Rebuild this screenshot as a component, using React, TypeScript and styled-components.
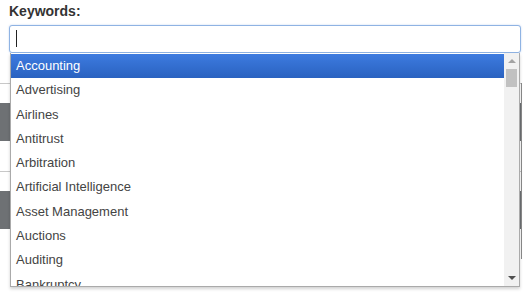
import React, { useState } from "react";
import styled, { createGlobalStyle } from "styled-components";

const GlobalStyle = createGlobalStyle`
  html, body {
    margin: 0;
    padding: 0;
    background: #fff;
    font-family: "Liberation Sans", Arial, sans-serif;
  }
`;

const keywords = [
  "Accounting",
  "Advertising",
  "Airlines",
  "Antitrust",
  "Arbitration",
  "Artificial Intelligence",
  "Asset Management",
  "Auctions",
  "Auditing",
  "Bankruptcy",
  "Banking",
];

const Page = styled.div`
  position: relative;
  width: 530px;
  height: 298px;
  overflow: hidden;
`;

const Field = styled.div`
  padding: 3px 9px 0 9px;
  position: relative;
`;

const Label = styled.label`
  display: block;
  font-size: 14px;
  font-weight: bold;
  color: #333;
  line-height: 17px;
  margin-bottom: 5px;
`;

const Input = styled.input`
  box-sizing: border-box;
  width: 512px;
  height: 28px;
  border: 1px solid #8fb3e3;
  border-radius: 3px;
  padding: 0 6px;
  font-size: 13px;
  font-family: inherit;
  outline: none;
  box-shadow: 0 0 2px rgba(102, 150, 220, 0.4);
`;

const Caret = styled.span`
  position: absolute;
  left: 16px;
  top: 30px;
  width: 1px;
  height: 17px;
  background: #222;
`;

const Behind = styled.div`
  margin-top: 30px;
  width: 522px;
  margin-left: -1px;
  border-right: 1px solid #8a8a8a;
`;

const Section = styled.div`
  border-top: 1px solid #c8c8c8;
  padding: 19px 0 30px 0;
`;

const GrayBar = styled.div`
  height: 38px;
  background: #6e7174;
`;

const Dropdown = styled.div`
  position: absolute;
  left: 10px;
  top: 53px;
  width: 510px;
  height: 234px;
  box-sizing: border-box;
  background: #fff;
  border: 1px solid #aaa;
  border-top: none;
  box-shadow: 0 2px 3px rgba(0, 0, 0, 0.18);
  display: flex;
  overflow: hidden;
`;

const List = styled.ul`
  list-style: none;
  margin: 0;
  padding: 1px 0 0 0;
  flex: 1;
  overflow: hidden;
`;

const Item = styled.li<{ $active: boolean }>`
  height: 24.3px;
  line-height: 24.3px;
  padding: 0 5px;
  font-size: 13px;
  color: ${(p) => (p.$active ? "#fff" : "#444")};
  background: ${(p) =>
    p.$active ? "linear-gradient(#3d7be0, #2a62c0)" : "transparent"};
  white-space: nowrap;
`;

const Scrollbar = styled.div`
  width: 15px;
  background: #f1f1f1;
  display: flex;
  flex-direction: column;
  align-items: center;
`;

const Arrow = styled.div<{ $down?: boolean; $color: string }>`
  width: 0;
  height: 0;
  border-left: 4px solid transparent;
  border-right: 4px solid transparent;
  ${(p) =>
    p.$down
      ? `border-top: 4px solid ${p.$color};`
      : `border-bottom: 4px solid ${p.$color};`}
`;

const ArrowBox = styled.div`
  height: 16px;
  width: 15px;
  display: flex;
  align-items: center;
  justify-content: center;
`;

const Thumb = styled.div`
  width: 11px;
  height: 18px;
  background: #c1c1c1;
`;

const Track = styled.div`
  flex: 1;
`;

export default function App() {
  const [active] = useState(0);
  return (
    <Page>
      <GlobalStyle />
      <Field>
        <Label>Keywords:</Label>
        <Input type="text" />
        <Caret />
      </Field>
      <Behind>
        <Section>
          <GrayBar />
        </Section>
        <Section>
          <GrayBar />
        </Section>
      </Behind>
      <Dropdown>
        <List>
          {keywords.map((k, i) => (
            <Item key={k} $active={i === active}>
              {k}
            </Item>
          ))}
        </List>
        <Scrollbar>
          <ArrowBox>
            <Arrow $color="#a3a3a3" />
          </ArrowBox>
          <Thumb />
          <Track />
          <ArrowBox>
            <Arrow $down $color="#505050" />
          </ArrowBox>
        </Scrollbar>
      </Dropdown>
    </Page>
  );
}
